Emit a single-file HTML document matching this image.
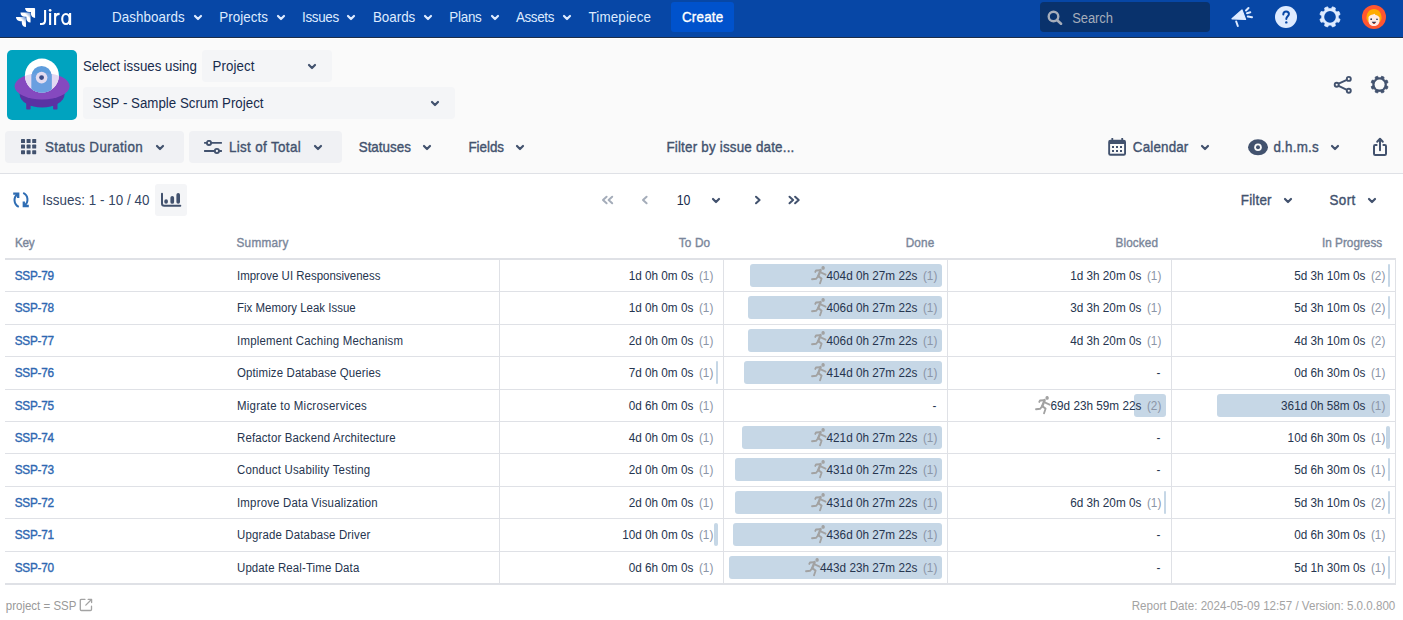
<!DOCTYPE html>
<html><head><meta charset="utf-8"><style>
html,body{margin:0;padding:0;width:1403px;height:620px;overflow:hidden;background:#ffffff;font-family:"Liberation Sans", sans-serif;}
.t{position:absolute;white-space:pre;}
.r{position:absolute;}
</style></head><body>
<div class="r" style="left:0px;top:0px;width:1403px;height:37px;background:#0747a6;"></div>
<div class="r" style="left:0px;top:37px;width:1403px;height:1px;background:#1d2e48;"></div>
<div class="r" style="left:0px;top:38px;width:1403px;height:1px;background:#ffffff;"></div>
<svg class="r" style="left:14px;top:6px" width="23" height="23" viewBox="0 0 24 24">
<defs><linearGradient id="g1" x1="1" y1="0" x2="0.3" y2="0.7"><stop offset="0" stop-color="#deebff" stop-opacity="0.4"/><stop offset="0.5" stop-color="#fff"/></linearGradient></defs>
<path fill="#fff" d="M11.53 2c0 2.4 1.97 4.35 4.35 4.35h1.78v1.7c0 2.4 1.94 4.34 4.34 4.35V2.84a.84.84 0 0 0-.84-.84H11.53z"/>
<path fill="url(#g1)" d="M6.77 6.8a4.362 4.362 0 0 0 4.34 4.34h1.8v1.72a4.362 4.362 0 0 0 4.34 4.34V7.63a.841.841 0 0 0-.83-.83H6.77z"/>
<path fill="url(#g1)" d="M2 11.6c0 2.4 1.95 4.34 4.35 4.35h1.78v1.72c.01 2.39 1.95 4.33 4.34 4.33v-9.57a.84.84 0 0 0-.84-.84L2 11.6z"/>
</svg>
<svg class="r" style="left:36px;top:4px" width="40" height="26" viewBox="36 4 40 26"><g fill="none" stroke="#ffffff" stroke-width="2.1">
<path d="M45.1 9.9V20.2C45.1 22.8 43.6 24 41.6 24H40"/><path d="M50.1 13V25"/><path d="M55.1 13V25M55.1 17.6Q55.4 13.9 59.6 13.9"/>
<ellipse cx="65.9" cy="19" rx="3.7" ry="4.95"/><path d="M70.1 13V25"/></g><circle cx="50.1" cy="10.3" r="1.35" fill="#fff"/></svg>
<div class="t" style="left:112.0px;top:11px;font-size:13.4px;line-height:13.4px;color:#deebff;font-weight:400;transform-origin:0 11px;transform:scaleY(1.12);letter-spacing:0.068px;">Dashboards</div>
<svg class="r" style="left:192.0px;top:12.5px" width="12" height="9" viewBox="-2 -2 12 9"><path d="M1 1L4.0 4L7 1" fill="none" stroke="#deebff" stroke-width="2.2" stroke-linecap="round" stroke-linejoin="round"/></svg>
<div class="t" style="left:219.2px;top:11px;font-size:13.4px;line-height:13.4px;color:#deebff;font-weight:400;transform-origin:0 11px;transform:scaleY(1.12);letter-spacing:0.041px;">Projects</div>
<svg class="r" style="left:274.8px;top:12.5px" width="12" height="9" viewBox="-2 -2 12 9"><path d="M1 1L4.0 4L7 1" fill="none" stroke="#deebff" stroke-width="2.2" stroke-linecap="round" stroke-linejoin="round"/></svg>
<div class="t" style="left:302.0px;top:11px;font-size:13.4px;line-height:13.4px;color:#deebff;font-weight:400;transform-origin:0 11px;transform:scaleY(1.12);letter-spacing:-0.317px;">Issues</div>
<svg class="r" style="left:345.3px;top:12.5px" width="12" height="9" viewBox="-2 -2 12 9"><path d="M1 1L4.0 4L7 1" fill="none" stroke="#deebff" stroke-width="2.2" stroke-linecap="round" stroke-linejoin="round"/></svg>
<div class="t" style="left:372.9px;top:11px;font-size:13.4px;line-height:13.4px;color:#deebff;font-weight:400;transform-origin:0 11px;transform:scaleY(1.12);letter-spacing:-0.006px;">Boards</div>
<svg class="r" style="left:422.0px;top:12.5px" width="12" height="9" viewBox="-2 -2 12 9"><path d="M1 1L4.0 4L7 1" fill="none" stroke="#deebff" stroke-width="2.2" stroke-linecap="round" stroke-linejoin="round"/></svg>
<div class="t" style="left:449.2px;top:11px;font-size:13.4px;line-height:13.4px;color:#deebff;font-weight:400;transform-origin:0 11px;transform:scaleY(1.12);letter-spacing:-0.220px;">Plans</div>
<svg class="r" style="left:489.0px;top:12.5px" width="12" height="9" viewBox="-2 -2 12 9"><path d="M1 1L4.0 4L7 1" fill="none" stroke="#deebff" stroke-width="2.2" stroke-linecap="round" stroke-linejoin="round"/></svg>
<div class="t" style="left:515.9px;top:11px;font-size:13.4px;line-height:13.4px;color:#deebff;font-weight:400;transform-origin:0 11px;transform:scaleY(1.12);letter-spacing:-0.348px;">Assets</div>
<svg class="r" style="left:561.0px;top:12.5px" width="12" height="9" viewBox="-2 -2 12 9"><path d="M1 1L4.0 4L7 1" fill="none" stroke="#deebff" stroke-width="2.2" stroke-linecap="round" stroke-linejoin="round"/></svg>
<div class="t" style="left:588.4px;top:11px;font-size:13.4px;line-height:13.4px;color:#deebff;font-weight:400;transform-origin:0 11px;transform:scaleY(1.12);letter-spacing:0.169px;">Timepiece</div>
<div class="r" style="left:671px;top:2px;width:63px;height:30px;background:#0052cc;border-radius:3px"></div>
<div class="t" style="left:682.0px;top:11px;font-size:13.4px;line-height:13.4px;color:#ffffff;font-weight:400;transform-origin:0 11px;transform:scaleY(1.12);letter-spacing:0.199px;-webkit-text-stroke:0.35px #ffffff;">Create</div>
<div class="r" style="left:1040px;top:2px;width:170px;height:30px;background:#09326c;border-radius:4px"></div>
<svg class="r" style="left:1047px;top:10px" width="16" height="15" viewBox="0 0 16 15"><circle cx="6.5" cy="6.5" r="4.8" fill="none" stroke="#a5adba" stroke-width="2.4"/><path d="M10 10L14 13.8" stroke="#a5adba" stroke-width="2.6" stroke-linecap="round"/></svg>
<div class="t" style="left:1072.2px;top:12px;font-size:13px;line-height:13px;color:#a5adba;font-weight:400;transform-origin:0 11px;transform:scaleY(1.12);letter-spacing:-0.101px;">Search</div>
<svg class="r" style="left:1228px;top:5px" width="28" height="24" viewBox="1228 5 28 24">
<path d="M1232 18.8L1242 10L1245.6 19.5Z" fill="#deebff" stroke="#deebff" stroke-width="1.2" stroke-linejoin="round"/>
<path d="M1236.2 21.5L1237.8 26" stroke="#deebff" stroke-width="2" stroke-linecap="round"/>
<path d="M1246 10.5L1248.5 8M1247 13.3L1250.3 12.3M1247.8 16.6L1252 17.2" stroke="#deebff" stroke-width="2" stroke-linecap="round"/>
</svg>
<svg class="r" style="left:1275px;top:6px" width="22" height="22" viewBox="0 0 22 22">
<circle cx="11" cy="11" r="11" fill="#deebff"/>
<path d="M8.3 8.4C8.3 6.6 9.5 5.4 11.1 5.4C12.7 5.4 13.9 6.6 13.9 8.1C13.9 10.1 11.3 10.5 11.3 12.9" fill="none" stroke="#0747a6" stroke-width="2" stroke-linecap="round"/>
<circle cx="11.3" cy="16.4" r="1.2" fill="#0747a6"/>
</svg>
<svg class="r" style="left:1316px;top:3px" width="28" height="28" viewBox="1316 3 28 28"><path d="M1338.22 18.08 L1340.10 19.40 L1338.91 22.27 L1336.64 21.87 L1334.97 23.54 L1335.37 25.81 L1332.50 27.00 L1331.18 25.12 L1328.82 25.12 L1327.50 27.00 L1324.63 25.81 L1325.03 23.54 L1323.36 21.87 L1321.09 22.27 L1319.90 19.40 L1321.78 18.08 L1321.78 15.72 L1319.90 14.40 L1321.09 11.53 L1323.36 11.93 L1325.03 10.26 L1324.63 7.99 L1327.50 6.80 L1328.82 8.68 L1331.18 8.68 L1332.50 6.80 L1335.37 7.99 L1334.97 10.26 L1336.64 11.93 L1338.91 11.53 L1340.10 14.40 L1338.22 15.72Z" fill="#deebff" stroke="#deebff" stroke-width="0.8" stroke-linejoin="round"/><circle cx="1330" cy="16.9" r="5.8" fill="#0747a6"/></svg>
<svg class="r" style="left:1362px;top:5px" width="24" height="24" viewBox="0 0 24 24">
<circle cx="12" cy="12" r="12" fill="#ff5630"/>
<path d="M4.5 14C4 8 7.5 4 12 4C16.5 4 20 8 19.5 14L18 17H6Z" fill="#ffab00"/>
<path d="M6.5 12C7.5 10.5 9 9.8 11 9.5L12.5 8.8L13.5 10C15 10.2 16.5 11 17.5 12.5V16C17.5 19 15 21 12 21C9 21 6.5 19 6.5 16Z" fill="#ffebe6"/>
<circle cx="9.2" cy="14.2" r="0.9" fill="#253858"/><path d="M14 14.2h2" stroke="#253858" stroke-width="1.1"/>
<path d="M9.8 16.8C10.5 18.8 13.5 18.8 14.2 16.8Z" fill="#253858"/><path d="M10.8 18C11.5 18.6 12.5 18.6 13.2 18" stroke="#de350b" stroke-width="1"/>
</svg>
<div class="r" style="left:0px;top:39px;width:1403px;height:134px;background:#fafafa;"></div>
<div class="r" style="left:0px;top:173px;width:1403px;height:1px;background:#dfe1e6;"></div>
<svg class="r" style="left:7px;top:50px" width="70" height="70" viewBox="0 0 70 70">
<defs><clipPath id="dome"><circle cx="34.9" cy="25.6" r="17"/></clipPath><clipPath id="cap"><rect x="24.6" y="10" width="20" height="50"/></clipPath></defs>
<rect width="70" height="70" rx="5" fill="#00a3bf"/>
<rect x="19.2" y="50" width="4.4" height="9.5" rx="0.8" fill="#5a32a3"/>
<rect x="46.1" y="50" width="4.4" height="9.5" rx="0.8" fill="#5a32a3"/>
<ellipse cx="35.1" cy="44" rx="22.5" ry="13.4" fill="#5a32a3"/>
<ellipse cx="35.1" cy="36.2" rx="27.5" ry="13.2" fill="#8549bf"/>
<circle cx="34.9" cy="25.6" r="17" fill="#ffffff"/>
<g clip-path="url(#dome)"><ellipse cx="35.1" cy="36.2" rx="27.5" ry="13.2" fill="#e3d9f3"/>
<path d="M24.6 60 L24.6 25.9 A10 10 0 0 1 44.6 25.9 L44.6 60Z" fill="#5e9ddd"/>
<ellipse cx="35.1" cy="36.2" rx="27.5" ry="13.2" fill="#6a9fe0" clip-path="url(#cap)"/></g>
<circle cx="34.6" cy="27.6" r="5.8" fill="#e3dcf0"/>
<circle cx="34.6" cy="27.6" r="2.4" fill="#3b4a86"/>
</svg>
<div class="t" style="left:82.9px;top:60px;font-size:13.3px;line-height:13.3px;color:#172b4d;font-weight:400;transform-origin:0 11px;transform:scaleY(1.12);letter-spacing:0.009px;">Select issues using</div>
<div class="r" style="left:202px;top:50px;width:130px;height:32px;background:#f4f5f7;border-radius:4px"></div>
<div class="t" style="left:212.5px;top:60px;font-size:13.3px;line-height:13.3px;color:#172b4d;font-weight:400;transform-origin:0 11px;transform:scaleY(1.12);letter-spacing:0.073px;">Project</div>
<svg class="r" style="left:306.0px;top:62.099999999999994px" width="12" height="9" viewBox="-2 -2 12 9"><path d="M1 1L4.0 4L7 1" fill="none" stroke="#42526e" stroke-width="2.2" stroke-linecap="round" stroke-linejoin="round"/></svg>
<div class="r" style="left:83px;top:87px;width:372px;height:32px;background:#f4f5f7;border-radius:4px"></div>
<div class="t" style="left:92.8px;top:97px;font-size:13.3px;line-height:13.3px;color:#172b4d;font-weight:400;transform-origin:0 11px;transform:scaleY(1.12);letter-spacing:0.009px;">SSP - Sample Scrum Project</div>
<svg class="r" style="left:429.0px;top:98.9px" width="12" height="9" viewBox="-2 -2 12 9"><path d="M1 1L4.0 4L7 1" fill="none" stroke="#42526e" stroke-width="2.2" stroke-linecap="round" stroke-linejoin="round"/></svg>
<svg class="r" style="left:1332px;top:74px" width="22" height="22" viewBox="0 0 22 22">
<g fill="none" stroke="#42526e" stroke-width="1.9"><circle cx="4.7" cy="10.7" r="2.0"/><circle cx="16.8" cy="4.9" r="2.0"/><circle cx="16.8" cy="16.8" r="2.0"/><path d="M6.6 9.7L14.9 5.8M6.6 11.8L14.9 15.8"/></g></svg>
<svg class="r" style="left:1368px;top:73px" width="22" height="22" viewBox="1368 73 22 22"><path d="M1386.43 85.58 L1388.05 86.69 L1387.05 89.09 L1385.12 88.74 L1383.74 90.12 L1384.09 92.05 L1381.69 93.05 L1380.58 91.43 L1378.62 91.43 L1377.51 93.05 L1375.11 92.05 L1375.46 90.12 L1374.08 88.74 L1372.15 89.09 L1371.15 86.69 L1372.77 85.58 L1372.77 83.62 L1371.15 82.51 L1372.15 80.11 L1374.08 80.46 L1375.46 79.08 L1375.11 77.15 L1377.51 76.15 L1378.62 77.77 L1380.58 77.77 L1381.69 76.15 L1384.09 77.15 L1383.74 79.08 L1385.12 80.46 L1387.05 80.11 L1388.05 82.51 L1386.43 83.62Z" fill="#42526e" stroke="#42526e" stroke-width="0.8" stroke-linejoin="round"/><circle cx="1379.6" cy="84.6" r="5.0" fill="#fafafa"/></svg>
<div class="r" style="left:5px;top:131px;width:179px;height:32px;background:#f0f1f4;border-radius:4px"></div>
<svg class="r" style="left:21px;top:138.5px" width="16" height="16" viewBox="0 0 16 16"><rect x="0.0" y="0.0" width="4" height="4" rx="0.6" fill="#42526e"/><rect x="5.6" y="0.0" width="4" height="4" rx="0.6" fill="#42526e"/><rect x="11.2" y="0.0" width="4" height="4" rx="0.6" fill="#42526e"/><rect x="0.0" y="5.6" width="4" height="4" rx="0.6" fill="#42526e"/><rect x="5.6" y="5.6" width="4" height="4" rx="0.6" fill="#42526e"/><rect x="11.2" y="5.6" width="4" height="4" rx="0.6" fill="#42526e"/><rect x="0.0" y="11.2" width="4" height="4" rx="0.6" fill="#42526e"/><rect x="5.6" y="11.2" width="4" height="4" rx="0.6" fill="#42526e"/><rect x="11.2" y="11.2" width="4" height="4" rx="0.6" fill="#42526e"/></svg>
<div class="t" style="left:44.9px;top:141px;font-size:13.4px;line-height:13.4px;color:#42526e;font-weight:400;transform-origin:0 11px;transform:scaleY(1.12);letter-spacing:0.400px;-webkit-text-stroke:0.35px #42526e;">Status Duration</div>
<svg class="r" style="left:154.0px;top:143.0px" width="12" height="9" viewBox="-2 -2 12 9"><path d="M1 1L4.0 4L7 1" fill="none" stroke="#42526e" stroke-width="2.2" stroke-linecap="round" stroke-linejoin="round"/></svg>
<div class="r" style="left:189px;top:131px;width:153px;height:32px;background:#f0f1f4;border-radius:4px"></div>
<svg class="r" style="left:203px;top:140px" width="20" height="15" viewBox="0 0 20 15">
<g fill="none" stroke="#42526e" stroke-width="1.9"><path d="M1.1 2.9H3.9M8.1 2.9H18.9M1.1 11H11.8M16 11H18.9"/><circle cx="6" cy="2.9" r="2.1"/><circle cx="13.9" cy="11" r="2.1"/></g></svg>
<div class="t" style="left:228.9px;top:141px;font-size:13.4px;line-height:13.4px;color:#42526e;font-weight:400;transform-origin:0 11px;transform:scaleY(1.12);letter-spacing:0.362px;-webkit-text-stroke:0.35px #42526e;">List of Total</div>
<svg class="r" style="left:312.0px;top:143.0px" width="12" height="9" viewBox="-2 -2 12 9"><path d="M1 1L4.0 4L7 1" fill="none" stroke="#42526e" stroke-width="2.2" stroke-linecap="round" stroke-linejoin="round"/></svg>
<div class="t" style="left:358.7px;top:141px;font-size:13.4px;line-height:13.4px;color:#42526e;font-weight:400;transform-origin:0 11px;transform:scaleY(1.12);letter-spacing:0.011px;-webkit-text-stroke:0.35px #42526e;">Statuses</div>
<svg class="r" style="left:421.0px;top:143.0px" width="12" height="9" viewBox="-2 -2 12 9"><path d="M1 1L4.0 4L7 1" fill="none" stroke="#42526e" stroke-width="2.2" stroke-linecap="round" stroke-linejoin="round"/></svg>
<div class="t" style="left:468.4px;top:141px;font-size:13.4px;line-height:13.4px;color:#42526e;font-weight:400;transform-origin:0 11px;transform:scaleY(1.12);letter-spacing:-0.022px;-webkit-text-stroke:0.35px #42526e;">Fields</div>
<svg class="r" style="left:514.0px;top:143.0px" width="12" height="9" viewBox="-2 -2 12 9"><path d="M1 1L4.0 4L7 1" fill="none" stroke="#42526e" stroke-width="2.2" stroke-linecap="round" stroke-linejoin="round"/></svg>
<div class="t" style="left:666.4px;top:141px;font-size:13.4px;line-height:13.4px;color:#42526e;font-weight:400;transform-origin:0 11px;transform:scaleY(1.12);letter-spacing:0.198px;-webkit-text-stroke:0.35px #42526e;">Filter by issue date...</div>
<svg class="r" style="left:1108px;top:138px" width="18" height="18" viewBox="0 0 18 18">
<rect x="0.2" y="1.8" width="17.8" height="16" rx="2.2" fill="#42526e"/><rect x="2.1" y="6" width="14" height="9.7" fill="#fafafa"/>
<rect x="3.4" y="0" width="1.8" height="3" fill="#42526e"/><rect x="13.3" y="0" width="1.8" height="3" fill="#42526e"/>
<g fill="#42526e"><rect x="4" y="8" width="2" height="2"/><rect x="8" y="8" width="2" height="2"/><rect x="12" y="8" width="2" height="2"/><rect x="4" y="12" width="2" height="2"/><rect x="8" y="12" width="2" height="2"/><rect x="12" y="12" width="2" height="2"/></g></svg>
<div class="t" style="left:1132.8px;top:141px;font-size:13.4px;line-height:13.4px;color:#42526e;font-weight:400;transform-origin:0 11px;transform:scaleY(1.12);letter-spacing:0.170px;-webkit-text-stroke:0.35px #42526e;">Calendar</div>
<svg class="r" style="left:1199.0px;top:143.0px" width="12" height="9" viewBox="-2 -2 12 9"><path d="M1 1L4.0 4L7 1" fill="none" stroke="#42526e" stroke-width="2.2" stroke-linecap="round" stroke-linejoin="round"/></svg>
<svg class="r" style="left:1248px;top:138.5px" width="20" height="17" viewBox="0 0 20 17">
<ellipse cx="10" cy="8.3" rx="10" ry="8" fill="#42526e"/><circle cx="10" cy="8.3" r="3.8" fill="#fafafa"/><circle cx="10" cy="8.3" r="2" fill="#42526e"/></svg>
<div class="t" style="left:1273.4px;top:141px;font-size:13.4px;line-height:13.4px;color:#42526e;font-weight:400;transform-origin:0 11px;transform:scaleY(1.12);letter-spacing:0.228px;-webkit-text-stroke:0.35px #42526e;">d.h.m.s</div>
<svg class="r" style="left:1329.0px;top:143.0px" width="12" height="9" viewBox="-2 -2 12 9"><path d="M1 1L4.0 4L7 1" fill="none" stroke="#42526e" stroke-width="2.2" stroke-linecap="round" stroke-linejoin="round"/></svg>
<svg class="r" style="left:1372px;top:137px" width="16" height="20" viewBox="0 0 16 20">
<g fill="none" stroke="#42526e" stroke-width="2" stroke-linejoin="round" stroke-linecap="round"><path d="M4.6 8H3.2Q2 8 2 9.2V16.8Q2 18 3.2 18H12.8Q14 18 14 16.8V9.2Q14 8 12.8 8H11.4"/><path d="M8 13.3V2M5.2 4.8L8 1.8L10.8 4.8"/></g></svg>
<div class="r" style="left:0px;top:174px;width:1403px;height:446px;background:#ffffff;"></div>
<svg class="r" style="left:8px;top:186px" width="26" height="26" viewBox="0 0 26 26">
<g fill="none" stroke="#2f6db3" stroke-width="2"><path d="M10.8 20.8A7.4 7.4 0 0 1 9.6 8.1"/><path d="M15.2 6.8A7.4 7.4 0 0 1 16.4 19.5"/>
<path d="M5.2 7.6H10.2V12" stroke-width="2.3"/><path d="M20.8 20H15.8V15.6" stroke-width="2.3"/></g></svg>
<div class="t" style="left:42.3px;top:194px;font-size:13.4px;line-height:13.4px;color:#344563;font-weight:400;transform-origin:0 11px;transform:scaleY(1.12);letter-spacing:0.045px;">Issues: 1 - 10 / 40</div>
<div class="r" style="left:155px;top:184px;width:32px;height:32px;background:#f4f5f7;border-radius:3px"></div>
<svg class="r" style="left:152px;top:182px" width="38" height="36" viewBox="0 0 38 36">
<path d="M10 11.8V21.6Q10 23.8 12.2 23.8H28.3" fill="none" stroke="#42526e" stroke-width="2" stroke-linecap="round"/>
<g fill="#42526e"><rect x="12.3" y="17.2" width="3.6" height="4.6" rx="1.8"/><rect x="18.4" y="14" width="3.7" height="7.8" rx="1.85"/><rect x="24.4" y="11" width="3.6" height="10.8" rx="1.8"/></g></svg>
<svg class="r" style="left:0;top:0" width="1403" height="230" viewBox="0 0 1403 230"><path d="M606.6 196.7L603 200L606.6 203.3" fill="none" stroke="#a5adba" stroke-width="2" stroke-linecap="round" stroke-linejoin="round"/><path d="M612.2 196.7L608.6 200L612.2 203.3" fill="none" stroke="#a5adba" stroke-width="2" stroke-linecap="round" stroke-linejoin="round"/></svg>
<svg class="r" style="left:0;top:0" width="1403" height="230" viewBox="0 0 1403 230"><path d="M646.6 196.7L643 200L646.6 203.3" fill="none" stroke="#a5adba" stroke-width="2" stroke-linecap="round" stroke-linejoin="round"/></svg>
<div class="t" style="left:676.7px;top:195px;font-size:12.4px;line-height:12.4px;color:#172b4d;font-weight:400;transform-origin:0 10px;transform:scaleY(1.12);">10</div>
<svg class="r" style="left:710.0px;top:196.0px" width="12" height="9" viewBox="-2 -2 12 9"><path d="M1 1L4.0 4L7 1" fill="none" stroke="#42526e" stroke-width="2.2" stroke-linecap="round" stroke-linejoin="round"/></svg>
<svg class="r" style="left:0;top:0" width="1403" height="230" viewBox="0 0 1403 230"><path d="M756 196.7L759.6 200L756 203.3" fill="none" stroke="#42526e" stroke-width="2" stroke-linecap="round" stroke-linejoin="round"/></svg>
<svg class="r" style="left:0;top:0" width="1403" height="230" viewBox="0 0 1403 230"><path d="M789.5 196.7L793.1 200L789.5 203.3" fill="none" stroke="#42526e" stroke-width="2" stroke-linecap="round" stroke-linejoin="round"/><path d="M795.1 196.7L798.7 200L795.1 203.3" fill="none" stroke="#42526e" stroke-width="2" stroke-linecap="round" stroke-linejoin="round"/></svg>
<div class="t" style="left:1240.8px;top:194px;font-size:13.4px;line-height:13.4px;color:#42526e;font-weight:400;transform-origin:0 11px;transform:scaleY(1.12);letter-spacing:0.206px;-webkit-text-stroke:0.35px #42526e;">Filter</div>
<svg class="r" style="left:1282.0px;top:195.5px" width="12" height="9" viewBox="-2 -2 12 9"><path d="M1 1L4.0 4L7 1" fill="none" stroke="#42526e" stroke-width="2.2" stroke-linecap="round" stroke-linejoin="round"/></svg>
<div class="t" style="left:1329.4px;top:194px;font-size:13.4px;line-height:13.4px;color:#42526e;font-weight:400;transform-origin:0 11px;transform:scaleY(1.12);letter-spacing:0.434px;-webkit-text-stroke:0.35px #42526e;">Sort</div>
<svg class="r" style="left:1366.0px;top:195.5px" width="12" height="9" viewBox="-2 -2 12 9"><path d="M1 1L4.0 4L7 1" fill="none" stroke="#42526e" stroke-width="2.2" stroke-linecap="round" stroke-linejoin="round"/></svg>
<div class="t" style="left:15.0px;top:238px;font-size:11.8px;line-height:11.8px;color:#7a869a;font-weight:400;transform-origin:0 9px;transform:scaleY(1.12);letter-spacing:-0.309px;-webkit-text-stroke:0.35px #7a869a;">Key</div>
<div class="t" style="left:236.5px;top:238px;font-size:11.8px;line-height:11.8px;color:#7a869a;font-weight:400;transform-origin:0 9px;transform:scaleY(1.12);letter-spacing:0.245px;-webkit-text-stroke:0.35px #7a869a;">Summary</div>
<div class="t" style="right:692.8px;top:238px;font-size:11.8px;line-height:11.8px;color:#7a869a;font-weight:400;text-align:right;transform-origin:0 9px;transform:scaleY(1.12);letter-spacing:0.134px;-webkit-text-stroke:0.35px #7a869a;margin-right:-0.134px;">To Do</div>
<div class="t" style="right:468.70000000000005px;top:238px;font-size:11.8px;line-height:11.8px;color:#7a869a;font-weight:400;text-align:right;transform-origin:0 9px;transform:scaleY(1.12);letter-spacing:0.124px;-webkit-text-stroke:0.35px #7a869a;margin-right:-0.124px;">Done</div>
<div class="t" style="right:245px;top:238px;font-size:11.8px;line-height:11.8px;color:#7a869a;font-weight:400;text-align:right;transform-origin:0 9px;transform:scaleY(1.12);letter-spacing:0.074px;-webkit-text-stroke:0.35px #7a869a;margin-right:-0.074px;">Blocked</div>
<div class="t" style="right:20.799999999999955px;top:238px;font-size:11.8px;line-height:11.8px;color:#7a869a;font-weight:400;text-align:right;transform-origin:0 9px;transform:scaleY(1.12);letter-spacing:-0.012px;-webkit-text-stroke:0.35px #7a869a;margin-right:0.012px;">In Progress</div>
<div class="r" style="left:5px;top:258px;width:1391px;height:2px;background:#dfe1e6;"></div>
<div class="r" style="left:5px;top:291px;width:1391px;height:1px;background:#dfe1e6;"></div>
<div class="r" style="left:5px;top:324px;width:1391px;height:1px;background:#dfe1e6;"></div>
<div class="r" style="left:5px;top:356px;width:1391px;height:1px;background:#dfe1e6;"></div>
<div class="r" style="left:5px;top:389px;width:1391px;height:1px;background:#dfe1e6;"></div>
<div class="r" style="left:5px;top:421px;width:1391px;height:1px;background:#dfe1e6;"></div>
<div class="r" style="left:5px;top:453px;width:1391px;height:1px;background:#dfe1e6;"></div>
<div class="r" style="left:5px;top:486px;width:1391px;height:1px;background:#dfe1e6;"></div>
<div class="r" style="left:5px;top:518px;width:1391px;height:1px;background:#dfe1e6;"></div>
<div class="r" style="left:5px;top:551px;width:1391px;height:1px;background:#dfe1e6;"></div>
<div class="r" style="left:5px;top:583px;width:1391px;height:2px;background:#dfe1e6;"></div>
<div class="r" style="left:499px;top:260px;width:1px;height:323px;background:#dfe1e6;"></div>
<div class="r" style="left:723px;top:260px;width:1px;height:323px;background:#dfe1e6;"></div>
<div class="r" style="left:947px;top:260px;width:1px;height:323px;background:#dfe1e6;"></div>
<div class="r" style="left:1171px;top:260px;width:1px;height:323px;background:#dfe1e6;"></div>
<div class="r" style="left:1395px;top:260px;width:1px;height:323px;background:#dfe1e6;"></div>
<div class="r" style="left:1395px;top:258px;width:1px;height:2px;background:#dfe1e6;"></div>
<div class="t" style="left:14.7px;top:271px;font-size:11.8px;line-height:11.8px;color:#2e67b1;font-weight:400;transform-origin:0 9px;transform:scaleY(1.12);letter-spacing:-0.259px;-webkit-text-stroke:0.35px #2e67b1;">SSP-79</div>
<div class="t" style="left:237.0px;top:271px;font-size:11.45px;line-height:11.45px;color:#26354f;font-weight:400;transform-origin:0 9px;transform:scaleY(1.12);letter-spacing:0.015px;">Improve UI Responsiveness</div>
<div class="t" style="right:689.7px;top:270px;font-size:11.75px;line-height:11.75px;color:#26354f;font-weight:400;text-align:right;transform-origin:0 10px;transform:scaleY(1.12);">1d 0h 0m 0s<span style="color:#8b95a6;margin-left:5.6px">(1)</span></div>
<div class="r" style="left:750.30px;top:264px;width:191.70px;height:23px;background:#c6d7e6;border-radius:3px"></div>
<div class="t" style="right:465.70000000000005px;top:270px;font-size:11.75px;line-height:11.75px;color:#26354f;font-weight:400;text-align:right;transform-origin:0 10px;transform:scaleY(1.12);"><span style="display:inline-block;position:relative;width:15.5px;height:1px"><svg style="position:absolute;left:0;bottom:-3.5px" width="16" height="17" viewBox="0 0 16 17"><g fill="none" stroke="#a2a2a2" stroke-linecap="round" stroke-linejoin="round"><circle cx="12.1" cy="2.2" r="1.2" fill="#a2a2a2" stroke-width="1"/><path d="M9 4.2L5 4.6L4.3 5.7" stroke-width="1.8"/><path d="M9.6 4.3L7.2 9.6" stroke-width="2.4"/><path d="M10.2 6.4L14.6 8.3" stroke-width="1.7"/><path d="M7.2 9.6L5.3 11.8L1 12.3" stroke-width="1.8"/><path d="M7.2 9.6L10.6 11.8L9 16" stroke-width="1.8"/></g></svg></span>404d 0h 27m 22s<span style="color:#8b95a6;margin-left:5.6px">(1)</span></div>
<div class="t" style="right:241.70000000000005px;top:270px;font-size:11.75px;line-height:11.75px;color:#26354f;font-weight:400;text-align:right;transform-origin:0 10px;transform:scaleY(1.12);">1d 3h 20m 0s<span style="color:#8b95a6;margin-left:5.6px">(1)</span></div>
<div class="r" style="left:1387.87px;top:264px;width:2.13px;height:23px;background:#c6d7e6;border-radius:2px"></div>
<div class="t" style="right:17.700000000000045px;top:270px;font-size:11.75px;line-height:11.75px;color:#26354f;font-weight:400;text-align:right;transform-origin:0 10px;transform:scaleY(1.12);">5d 3h 10m 0s<span style="color:#8b95a6;margin-left:5.6px">(2)</span></div>
<div class="t" style="left:14.7px;top:303px;font-size:11.8px;line-height:11.8px;color:#2e67b1;font-weight:400;transform-origin:0 9px;transform:scaleY(1.12);letter-spacing:-0.259px;-webkit-text-stroke:0.35px #2e67b1;">SSP-78</div>
<div class="t" style="left:237.0px;top:303px;font-size:11.45px;line-height:11.45px;color:#26354f;font-weight:400;transform-origin:0 9px;transform:scaleY(1.12);letter-spacing:0.022px;">Fix Memory Leak Issue</div>
<div class="t" style="right:689.7px;top:302px;font-size:11.75px;line-height:11.75px;color:#26354f;font-weight:400;text-align:right;transform-origin:0 10px;transform:scaleY(1.12);">1d 0h 0m 0s<span style="color:#8b95a6;margin-left:5.6px">(1)</span></div>
<div class="r" style="left:748.17px;top:296px;width:193.83px;height:23px;background:#c6d7e6;border-radius:3px"></div>
<div class="t" style="right:465.70000000000005px;top:302px;font-size:11.75px;line-height:11.75px;color:#26354f;font-weight:400;text-align:right;transform-origin:0 10px;transform:scaleY(1.12);"><span style="display:inline-block;position:relative;width:15.5px;height:1px"><svg style="position:absolute;left:0;bottom:-3.5px" width="16" height="17" viewBox="0 0 16 17"><g fill="none" stroke="#a2a2a2" stroke-linecap="round" stroke-linejoin="round"><circle cx="12.1" cy="2.2" r="1.2" fill="#a2a2a2" stroke-width="1"/><path d="M9 4.2L5 4.6L4.3 5.7" stroke-width="1.8"/><path d="M9.6 4.3L7.2 9.6" stroke-width="2.4"/><path d="M10.2 6.4L14.6 8.3" stroke-width="1.7"/><path d="M7.2 9.6L5.3 11.8L1 12.3" stroke-width="1.8"/><path d="M7.2 9.6L10.6 11.8L9 16" stroke-width="1.8"/></g></svg></span>406d 0h 27m 22s<span style="color:#8b95a6;margin-left:5.6px">(1)</span></div>
<div class="t" style="right:241.70000000000005px;top:302px;font-size:11.75px;line-height:11.75px;color:#26354f;font-weight:400;text-align:right;transform-origin:0 10px;transform:scaleY(1.12);">3d 3h 20m 0s<span style="color:#8b95a6;margin-left:5.6px">(1)</span></div>
<div class="r" style="left:1387.87px;top:296px;width:2.13px;height:23px;background:#c6d7e6;border-radius:2px"></div>
<div class="t" style="right:17.700000000000045px;top:302px;font-size:11.75px;line-height:11.75px;color:#26354f;font-weight:400;text-align:right;transform-origin:0 10px;transform:scaleY(1.12);">5d 3h 10m 0s<span style="color:#8b95a6;margin-left:5.6px">(2)</span></div>
<div class="t" style="left:14.7px;top:336px;font-size:11.8px;line-height:11.8px;color:#2e67b1;font-weight:400;transform-origin:0 9px;transform:scaleY(1.12);letter-spacing:-0.259px;-webkit-text-stroke:0.35px #2e67b1;">SSP-77</div>
<div class="t" style="left:237.0px;top:336px;font-size:11.45px;line-height:11.45px;color:#26354f;font-weight:400;transform-origin:0 9px;transform:scaleY(1.12);letter-spacing:0.222px;">Implement Caching Mechanism</div>
<div class="t" style="right:689.7px;top:335px;font-size:11.75px;line-height:11.75px;color:#26354f;font-weight:400;text-align:right;transform-origin:0 10px;transform:scaleY(1.12);">2d 0h 0m 0s<span style="color:#8b95a6;margin-left:5.6px">(1)</span></div>
<div class="r" style="left:748.17px;top:329px;width:193.83px;height:23px;background:#c6d7e6;border-radius:3px"></div>
<div class="t" style="right:465.70000000000005px;top:335px;font-size:11.75px;line-height:11.75px;color:#26354f;font-weight:400;text-align:right;transform-origin:0 10px;transform:scaleY(1.12);"><span style="display:inline-block;position:relative;width:15.5px;height:1px"><svg style="position:absolute;left:0;bottom:-3.5px" width="16" height="17" viewBox="0 0 16 17"><g fill="none" stroke="#a2a2a2" stroke-linecap="round" stroke-linejoin="round"><circle cx="12.1" cy="2.2" r="1.2" fill="#a2a2a2" stroke-width="1"/><path d="M9 4.2L5 4.6L4.3 5.7" stroke-width="1.8"/><path d="M9.6 4.3L7.2 9.6" stroke-width="2.4"/><path d="M10.2 6.4L14.6 8.3" stroke-width="1.7"/><path d="M7.2 9.6L5.3 11.8L1 12.3" stroke-width="1.8"/><path d="M7.2 9.6L10.6 11.8L9 16" stroke-width="1.8"/></g></svg></span>406d 0h 27m 22s<span style="color:#8b95a6;margin-left:5.6px">(1)</span></div>
<div class="t" style="right:241.70000000000005px;top:335px;font-size:11.75px;line-height:11.75px;color:#26354f;font-weight:400;text-align:right;transform-origin:0 10px;transform:scaleY(1.12);">4d 3h 20m 0s<span style="color:#8b95a6;margin-left:5.6px">(1)</span></div>
<div class="t" style="right:17.700000000000045px;top:335px;font-size:11.75px;line-height:11.75px;color:#26354f;font-weight:400;text-align:right;transform-origin:0 10px;transform:scaleY(1.12);">4d 3h 10m 0s<span style="color:#8b95a6;margin-left:5.6px">(2)</span></div>
<div class="t" style="left:14.7px;top:368px;font-size:11.8px;line-height:11.8px;color:#2e67b1;font-weight:400;transform-origin:0 9px;transform:scaleY(1.12);letter-spacing:-0.259px;-webkit-text-stroke:0.35px #2e67b1;">SSP-76</div>
<div class="t" style="left:237.0px;top:368px;font-size:11.45px;line-height:11.45px;color:#26354f;font-weight:400;transform-origin:0 9px;transform:scaleY(1.12);letter-spacing:0.132px;">Optimize Database Queries</div>
<div class="r" style="left:715.87px;top:361px;width:2.13px;height:23px;background:#c6d7e6;border-radius:2px"></div>
<div class="t" style="right:689.7px;top:367px;font-size:11.75px;line-height:11.75px;color:#26354f;font-weight:400;text-align:right;transform-origin:0 10px;transform:scaleY(1.12);">7d 0h 0m 0s<span style="color:#8b95a6;margin-left:5.6px">(1)</span></div>
<div class="r" style="left:743.91px;top:361px;width:198.09px;height:23px;background:#c6d7e6;border-radius:3px"></div>
<div class="t" style="right:465.70000000000005px;top:367px;font-size:11.75px;line-height:11.75px;color:#26354f;font-weight:400;text-align:right;transform-origin:0 10px;transform:scaleY(1.12);"><span style="display:inline-block;position:relative;width:15.5px;height:1px"><svg style="position:absolute;left:0;bottom:-3.5px" width="16" height="17" viewBox="0 0 16 17"><g fill="none" stroke="#a2a2a2" stroke-linecap="round" stroke-linejoin="round"><circle cx="12.1" cy="2.2" r="1.2" fill="#a2a2a2" stroke-width="1"/><path d="M9 4.2L5 4.6L4.3 5.7" stroke-width="1.8"/><path d="M9.6 4.3L7.2 9.6" stroke-width="2.4"/><path d="M10.2 6.4L14.6 8.3" stroke-width="1.7"/><path d="M7.2 9.6L5.3 11.8L1 12.3" stroke-width="1.8"/><path d="M7.2 9.6L10.6 11.8L9 16" stroke-width="1.8"/></g></svg></span>414d 0h 27m 22s<span style="color:#8b95a6;margin-left:5.6px">(1)</span></div>
<div class="t" style="right:242.5px;top:367px;font-size:11.75px;line-height:11.75px;color:#26354f;font-weight:400;text-align:right;transform-origin:0 10px;transform:scaleY(1.12);">-</div>
<div class="t" style="right:17.700000000000045px;top:367px;font-size:11.75px;line-height:11.75px;color:#26354f;font-weight:400;text-align:right;transform-origin:0 10px;transform:scaleY(1.12);">0d 6h 30m 0s<span style="color:#8b95a6;margin-left:5.6px">(1)</span></div>
<div class="t" style="left:14.7px;top:401px;font-size:11.8px;line-height:11.8px;color:#2e67b1;font-weight:400;transform-origin:0 9px;transform:scaleY(1.12);letter-spacing:-0.259px;-webkit-text-stroke:0.35px #2e67b1;">SSP-75</div>
<div class="t" style="left:237.0px;top:401px;font-size:11.45px;line-height:11.45px;color:#26354f;font-weight:400;transform-origin:0 9px;transform:scaleY(1.12);letter-spacing:0.253px;">Migrate to Microservices</div>
<div class="t" style="right:689.7px;top:400px;font-size:11.75px;line-height:11.75px;color:#26354f;font-weight:400;text-align:right;transform-origin:0 10px;transform:scaleY(1.12);">0d 6h 0m 0s<span style="color:#8b95a6;margin-left:5.6px">(1)</span></div>
<div class="t" style="right:466.5px;top:400px;font-size:11.75px;line-height:11.75px;color:#26354f;font-weight:400;text-align:right;transform-origin:0 10px;transform:scaleY(1.12);">-</div>
<div class="r" style="left:1134.05px;top:394px;width:31.95px;height:23px;background:#c6d7e6;border-radius:3px"></div>
<div class="t" style="right:241.70000000000005px;top:400px;font-size:11.75px;line-height:11.75px;color:#26354f;font-weight:400;text-align:right;transform-origin:0 10px;transform:scaleY(1.12);"><span style="display:inline-block;position:relative;width:15.5px;height:1px"><svg style="position:absolute;left:0;bottom:-3.5px" width="16" height="17" viewBox="0 0 16 17"><g fill="none" stroke="#a2a2a2" stroke-linecap="round" stroke-linejoin="round"><circle cx="12.1" cy="2.2" r="1.2" fill="#a2a2a2" stroke-width="1"/><path d="M9 4.2L5 4.6L4.3 5.7" stroke-width="1.8"/><path d="M9.6 4.3L7.2 9.6" stroke-width="2.4"/><path d="M10.2 6.4L14.6 8.3" stroke-width="1.7"/><path d="M7.2 9.6L5.3 11.8L1 12.3" stroke-width="1.8"/><path d="M7.2 9.6L10.6 11.8L9 16" stroke-width="1.8"/></g></svg></span>69d 23h 59m 22s<span style="color:#8b95a6;margin-left:5.6px">(2)</span></div>
<div class="r" style="left:1217.47px;top:394px;width:172.53px;height:23px;background:#c6d7e6;border-radius:3px"></div>
<div class="t" style="right:17.700000000000045px;top:400px;font-size:11.75px;line-height:11.75px;color:#26354f;font-weight:400;text-align:right;transform-origin:0 10px;transform:scaleY(1.12);">361d 0h 58m 0s<span style="color:#8b95a6;margin-left:5.6px">(1)</span></div>
<div class="t" style="left:14.7px;top:433px;font-size:11.8px;line-height:11.8px;color:#2e67b1;font-weight:400;transform-origin:0 9px;transform:scaleY(1.12);letter-spacing:-0.259px;-webkit-text-stroke:0.35px #2e67b1;">SSP-74</div>
<div class="t" style="left:237.0px;top:433px;font-size:11.45px;line-height:11.45px;color:#26354f;font-weight:400;transform-origin:0 9px;transform:scaleY(1.12);letter-spacing:0.145px;">Refactor Backend Architecture</div>
<div class="t" style="right:689.7px;top:432px;font-size:11.75px;line-height:11.75px;color:#26354f;font-weight:400;text-align:right;transform-origin:0 10px;transform:scaleY(1.12);">4d 0h 0m 0s<span style="color:#8b95a6;margin-left:5.6px">(1)</span></div>
<div class="r" style="left:741.78px;top:426px;width:200.22px;height:23px;background:#c6d7e6;border-radius:3px"></div>
<div class="t" style="right:465.70000000000005px;top:432px;font-size:11.75px;line-height:11.75px;color:#26354f;font-weight:400;text-align:right;transform-origin:0 10px;transform:scaleY(1.12);"><span style="display:inline-block;position:relative;width:15.5px;height:1px"><svg style="position:absolute;left:0;bottom:-3.5px" width="16" height="17" viewBox="0 0 16 17"><g fill="none" stroke="#a2a2a2" stroke-linecap="round" stroke-linejoin="round"><circle cx="12.1" cy="2.2" r="1.2" fill="#a2a2a2" stroke-width="1"/><path d="M9 4.2L5 4.6L4.3 5.7" stroke-width="1.8"/><path d="M9.6 4.3L7.2 9.6" stroke-width="2.4"/><path d="M10.2 6.4L14.6 8.3" stroke-width="1.7"/><path d="M7.2 9.6L5.3 11.8L1 12.3" stroke-width="1.8"/><path d="M7.2 9.6L10.6 11.8L9 16" stroke-width="1.8"/></g></svg></span>421d 0h 27m 22s<span style="color:#8b95a6;margin-left:5.6px">(1)</span></div>
<div class="t" style="right:242.5px;top:432px;font-size:11.75px;line-height:11.75px;color:#26354f;font-weight:400;text-align:right;transform-origin:0 10px;transform:scaleY(1.12);">-</div>
<div class="r" style="left:1385.74px;top:426px;width:4.26px;height:23px;background:#c6d7e6;border-radius:2px"></div>
<div class="t" style="right:17.700000000000045px;top:432px;font-size:11.75px;line-height:11.75px;color:#26354f;font-weight:400;text-align:right;transform-origin:0 10px;transform:scaleY(1.12);">10d 6h 30m 0s<span style="color:#8b95a6;margin-left:5.6px">(1)</span></div>
<div class="t" style="left:14.7px;top:465px;font-size:11.8px;line-height:11.8px;color:#2e67b1;font-weight:400;transform-origin:0 9px;transform:scaleY(1.12);letter-spacing:-0.259px;-webkit-text-stroke:0.35px #2e67b1;">SSP-73</div>
<div class="t" style="left:237.0px;top:465px;font-size:11.45px;line-height:11.45px;color:#26354f;font-weight:400;transform-origin:0 9px;transform:scaleY(1.12);letter-spacing:0.207px;">Conduct Usability Testing</div>
<div class="t" style="right:689.7px;top:464px;font-size:11.75px;line-height:11.75px;color:#26354f;font-weight:400;text-align:right;transform-origin:0 10px;transform:scaleY(1.12);">2d 0h 0m 0s<span style="color:#8b95a6;margin-left:5.6px">(1)</span></div>
<div class="r" style="left:735.39px;top:458px;width:206.61px;height:23px;background:#c6d7e6;border-radius:3px"></div>
<div class="t" style="right:465.70000000000005px;top:464px;font-size:11.75px;line-height:11.75px;color:#26354f;font-weight:400;text-align:right;transform-origin:0 10px;transform:scaleY(1.12);"><span style="display:inline-block;position:relative;width:15.5px;height:1px"><svg style="position:absolute;left:0;bottom:-3.5px" width="16" height="17" viewBox="0 0 16 17"><g fill="none" stroke="#a2a2a2" stroke-linecap="round" stroke-linejoin="round"><circle cx="12.1" cy="2.2" r="1.2" fill="#a2a2a2" stroke-width="1"/><path d="M9 4.2L5 4.6L4.3 5.7" stroke-width="1.8"/><path d="M9.6 4.3L7.2 9.6" stroke-width="2.4"/><path d="M10.2 6.4L14.6 8.3" stroke-width="1.7"/><path d="M7.2 9.6L5.3 11.8L1 12.3" stroke-width="1.8"/><path d="M7.2 9.6L10.6 11.8L9 16" stroke-width="1.8"/></g></svg></span>431d 0h 27m 22s<span style="color:#8b95a6;margin-left:5.6px">(1)</span></div>
<div class="t" style="right:242.5px;top:464px;font-size:11.75px;line-height:11.75px;color:#26354f;font-weight:400;text-align:right;transform-origin:0 10px;transform:scaleY(1.12);">-</div>
<div class="r" style="left:1387.87px;top:458px;width:2.13px;height:23px;background:#c6d7e6;border-radius:2px"></div>
<div class="t" style="right:17.700000000000045px;top:464px;font-size:11.75px;line-height:11.75px;color:#26354f;font-weight:400;text-align:right;transform-origin:0 10px;transform:scaleY(1.12);">5d 6h 30m 0s<span style="color:#8b95a6;margin-left:5.6px">(1)</span></div>
<div class="t" style="left:14.7px;top:498px;font-size:11.8px;line-height:11.8px;color:#2e67b1;font-weight:400;transform-origin:0 9px;transform:scaleY(1.12);letter-spacing:-0.259px;-webkit-text-stroke:0.35px #2e67b1;">SSP-72</div>
<div class="t" style="left:237.0px;top:498px;font-size:11.45px;line-height:11.45px;color:#26354f;font-weight:400;transform-origin:0 9px;transform:scaleY(1.12);letter-spacing:0.194px;">Improve Data Visualization</div>
<div class="t" style="right:689.7px;top:497px;font-size:11.75px;line-height:11.75px;color:#26354f;font-weight:400;text-align:right;transform-origin:0 10px;transform:scaleY(1.12);">2d 0h 0m 0s<span style="color:#8b95a6;margin-left:5.6px">(1)</span></div>
<div class="r" style="left:735.39px;top:491px;width:206.61px;height:23px;background:#c6d7e6;border-radius:3px"></div>
<div class="t" style="right:465.70000000000005px;top:497px;font-size:11.75px;line-height:11.75px;color:#26354f;font-weight:400;text-align:right;transform-origin:0 10px;transform:scaleY(1.12);"><span style="display:inline-block;position:relative;width:15.5px;height:1px"><svg style="position:absolute;left:0;bottom:-3.5px" width="16" height="17" viewBox="0 0 16 17"><g fill="none" stroke="#a2a2a2" stroke-linecap="round" stroke-linejoin="round"><circle cx="12.1" cy="2.2" r="1.2" fill="#a2a2a2" stroke-width="1"/><path d="M9 4.2L5 4.6L4.3 5.7" stroke-width="1.8"/><path d="M9.6 4.3L7.2 9.6" stroke-width="2.4"/><path d="M10.2 6.4L14.6 8.3" stroke-width="1.7"/><path d="M7.2 9.6L5.3 11.8L1 12.3" stroke-width="1.8"/><path d="M7.2 9.6L10.6 11.8L9 16" stroke-width="1.8"/></g></svg></span>431d 0h 27m 22s<span style="color:#8b95a6;margin-left:5.6px">(1)</span></div>
<div class="r" style="left:1163.87px;top:491px;width:2.13px;height:23px;background:#c6d7e6;border-radius:2px"></div>
<div class="t" style="right:241.70000000000005px;top:497px;font-size:11.75px;line-height:11.75px;color:#26354f;font-weight:400;text-align:right;transform-origin:0 10px;transform:scaleY(1.12);">6d 3h 20m 0s<span style="color:#8b95a6;margin-left:5.6px">(1)</span></div>
<div class="r" style="left:1387.87px;top:491px;width:2.13px;height:23px;background:#c6d7e6;border-radius:2px"></div>
<div class="t" style="right:17.700000000000045px;top:497px;font-size:11.75px;line-height:11.75px;color:#26354f;font-weight:400;text-align:right;transform-origin:0 10px;transform:scaleY(1.12);">5d 3h 10m 0s<span style="color:#8b95a6;margin-left:5.6px">(2)</span></div>
<div class="t" style="left:14.7px;top:530px;font-size:11.8px;line-height:11.8px;color:#2e67b1;font-weight:400;transform-origin:0 9px;transform:scaleY(1.12);letter-spacing:-0.259px;-webkit-text-stroke:0.35px #2e67b1;">SSP-71</div>
<div class="t" style="left:237.0px;top:530px;font-size:11.45px;line-height:11.45px;color:#26354f;font-weight:400;transform-origin:0 9px;transform:scaleY(1.12);letter-spacing:0.161px;">Upgrade Database Driver</div>
<div class="r" style="left:713.74px;top:523px;width:4.26px;height:23px;background:#c6d7e6;border-radius:2px"></div>
<div class="t" style="right:689.7px;top:529px;font-size:11.75px;line-height:11.75px;color:#26354f;font-weight:400;text-align:right;transform-origin:0 10px;transform:scaleY(1.12);">10d 0h 0m 0s<span style="color:#8b95a6;margin-left:5.6px">(1)</span></div>
<div class="r" style="left:733.26px;top:523px;width:208.74px;height:23px;background:#c6d7e6;border-radius:3px"></div>
<div class="t" style="right:465.70000000000005px;top:529px;font-size:11.75px;line-height:11.75px;color:#26354f;font-weight:400;text-align:right;transform-origin:0 10px;transform:scaleY(1.12);"><span style="display:inline-block;position:relative;width:15.5px;height:1px"><svg style="position:absolute;left:0;bottom:-3.5px" width="16" height="17" viewBox="0 0 16 17"><g fill="none" stroke="#a2a2a2" stroke-linecap="round" stroke-linejoin="round"><circle cx="12.1" cy="2.2" r="1.2" fill="#a2a2a2" stroke-width="1"/><path d="M9 4.2L5 4.6L4.3 5.7" stroke-width="1.8"/><path d="M9.6 4.3L7.2 9.6" stroke-width="2.4"/><path d="M10.2 6.4L14.6 8.3" stroke-width="1.7"/><path d="M7.2 9.6L5.3 11.8L1 12.3" stroke-width="1.8"/><path d="M7.2 9.6L10.6 11.8L9 16" stroke-width="1.8"/></g></svg></span>436d 0h 27m 22s<span style="color:#8b95a6;margin-left:5.6px">(1)</span></div>
<div class="t" style="right:242.5px;top:529px;font-size:11.75px;line-height:11.75px;color:#26354f;font-weight:400;text-align:right;transform-origin:0 10px;transform:scaleY(1.12);">-</div>
<div class="t" style="right:17.700000000000045px;top:529px;font-size:11.75px;line-height:11.75px;color:#26354f;font-weight:400;text-align:right;transform-origin:0 10px;transform:scaleY(1.12);">0d 6h 30m 0s<span style="color:#8b95a6;margin-left:5.6px">(1)</span></div>
<div class="t" style="left:14.7px;top:563px;font-size:11.8px;line-height:11.8px;color:#2e67b1;font-weight:400;transform-origin:0 9px;transform:scaleY(1.12);letter-spacing:-0.259px;-webkit-text-stroke:0.35px #2e67b1;">SSP-70</div>
<div class="t" style="left:237.0px;top:563px;font-size:11.45px;line-height:11.45px;color:#26354f;font-weight:400;transform-origin:0 9px;transform:scaleY(1.12);letter-spacing:0.127px;">Update Real-Time Data</div>
<div class="t" style="right:689.7px;top:562px;font-size:11.75px;line-height:11.75px;color:#26354f;font-weight:400;text-align:right;transform-origin:0 10px;transform:scaleY(1.12);">0d 6h 0m 0s<span style="color:#8b95a6;margin-left:5.6px">(1)</span></div>
<div class="r" style="left:729.00px;top:556px;width:213.00px;height:23px;background:#c6d7e6;border-radius:3px"></div>
<div class="t" style="right:465.70000000000005px;top:562px;font-size:11.75px;line-height:11.75px;color:#26354f;font-weight:400;text-align:right;transform-origin:0 10px;transform:scaleY(1.12);"><span style="display:inline-block;position:relative;width:15.5px;height:1px"><svg style="position:absolute;left:0;bottom:-3.5px" width="16" height="17" viewBox="0 0 16 17"><g fill="none" stroke="#a2a2a2" stroke-linecap="round" stroke-linejoin="round"><circle cx="12.1" cy="2.2" r="1.2" fill="#a2a2a2" stroke-width="1"/><path d="M9 4.2L5 4.6L4.3 5.7" stroke-width="1.8"/><path d="M9.6 4.3L7.2 9.6" stroke-width="2.4"/><path d="M10.2 6.4L14.6 8.3" stroke-width="1.7"/><path d="M7.2 9.6L5.3 11.8L1 12.3" stroke-width="1.8"/><path d="M7.2 9.6L10.6 11.8L9 16" stroke-width="1.8"/></g></svg></span>443d 23h 27m 22s<span style="color:#8b95a6;margin-left:5.6px">(1)</span></div>
<div class="t" style="right:242.5px;top:562px;font-size:11.75px;line-height:11.75px;color:#26354f;font-weight:400;text-align:right;transform-origin:0 10px;transform:scaleY(1.12);">-</div>
<div class="r" style="left:1387.87px;top:556px;width:2.13px;height:23px;background:#c6d7e6;border-radius:2px"></div>
<div class="t" style="right:17.700000000000045px;top:562px;font-size:11.75px;line-height:11.75px;color:#26354f;font-weight:400;text-align:right;transform-origin:0 10px;transform:scaleY(1.12);">5d 1h 30m 0s<span style="color:#8b95a6;margin-left:5.6px">(1)</span></div>
<div class="t" style="left:5.8px;top:601px;font-size:11.5px;line-height:11.5px;color:#999999;font-weight:400;transform-origin:0 9px;transform:scaleY(1.12);">project = SSP</div>
<svg class="r" style="left:79px;top:598px" width="14" height="14" viewBox="0 0 14 14"><g fill="none" stroke="#a3a3a3" stroke-width="1.3" stroke-linecap="round" stroke-linejoin="round"><path d="M6 1.3H2.4Q1.3 1.3 1.3 2.4V11.4Q1.3 12.5 2.4 12.5H11.4Q12.5 12.5 12.5 11.4V8.2"/><path d="M6.8 7.1L12.2 1.7M9.2 1.4H12.6V4.6"/></g></svg>
<div class="t" style="right:7.7000000000000455px;top:600px;font-size:11.6px;line-height:11.6px;color:#a3a3a3;font-weight:400;text-align:right;transform-origin:0 10px;transform:scaleY(1.12);">Report Date: 2024-05-09 12:57 / Version: 5.0.0.800</div>
</body></html>
